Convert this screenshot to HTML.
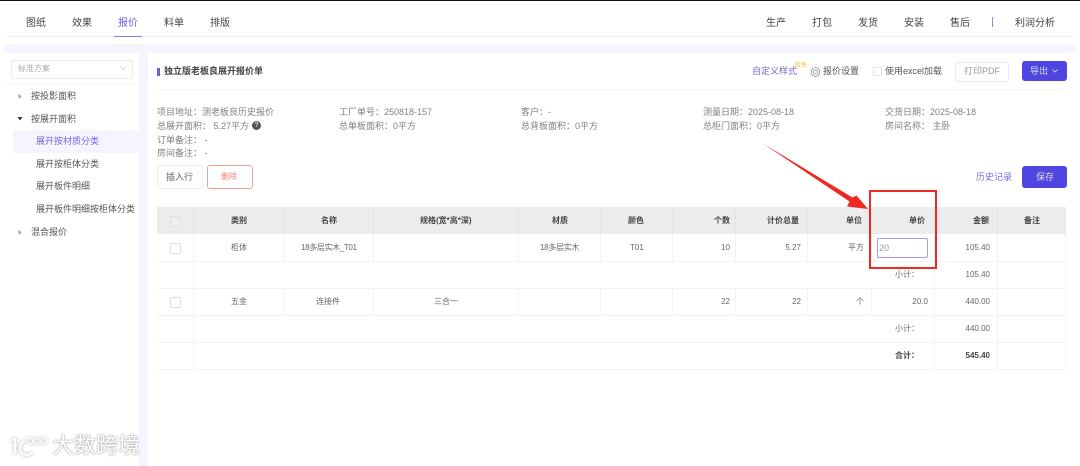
<!DOCTYPE html>
<html lang="zh"><head><meta charset="utf-8"><style>
html,body{margin:0;padding:0;width:1080px;height:466px;overflow:hidden;background:#fff}
body{font-family:"Liberation Sans","Noto Sans CJK SC",sans-serif;position:relative;color:#606266}
#w{position:absolute;left:0;top:0;width:1080px;height:466px;filter:blur(.35px);overflow:hidden}
.a{position:absolute;white-space:nowrap;line-height:14px;font-size:9px}
.b{position:absolute}
.n{font-size:10px;color:#444;top:17px}
.g{color:#808080;font-size:9px}
.s{font-size:9px;color:#555}
.h{position:absolute;top:207px;height:27px;line-height:27px;font-size:8px;font-weight:bold;color:#444;white-space:nowrap}
.c{position:absolute;font-size:8px;line-height:27px;height:27px;color:#666;white-space:nowrap}
.v{position:absolute;width:1px;background:#f3f3f3}
.l{position:absolute;height:1px;background:#f3f3f3;left:157px;width:909px}
.cb{position:absolute;left:170px;width:9px;height:9px;border:1px solid #dedede;border-radius:2px;background:#fff}
</style></head><body><div id="w">
<div class="b" style="left:0;top:0;width:1080px;height:1px;background:#111"></div>
<div class="b" style="left:4px;top:36px;width:1072px;height:1px;background:#f2f2f2"></div>
<div class="b" style="left:4px;top:44px;width:1072px;height:422px;background:#f5f5ff"></div>
<div class="b" style="left:4px;top:53px;width:135px;height:413px;background:#fff"></div>
<div class="b" style="left:148px;top:53px;width:928px;height:413px;background:#fff"></div>

<span class="a n" style="left:26px">图纸</span>
<span class="a n" style="left:72px">效果</span>
<span class="a n" style="left:118px;color:#6a5fe0">报价</span>
<span class="a n" style="left:164px">料单</span>
<span class="a n" style="left:210px">排版</span>
<div class="b" style="left:114px;top:36px;width:28px;height:1px;background:#8b80e8"></div>
<span class="a n" style="left:766px">生产</span>
<span class="a n" style="left:812px">打包</span>
<span class="a n" style="left:858px">发货</span>
<span class="a n" style="left:904px">安装</span>
<span class="a n" style="left:950px">售后</span>
<div class="b" style="left:992px;top:17px;width:1px;height:10px;background:#8b8fd0"></div>
<span class="a n" style="left:1015px">利润分析</span>

<!-- sidebar -->
<div class="b" style="left:11px;top:60px;width:120px;height:17px;border:1px solid #ebebeb;border-radius:2px"></div>
<span class="a" style="left:18px;top:62px;font-size:8px;color:#aaa">标准方案</span>
<svg class="b" style="left:119px;top:65px" width="9" height="7"><path d="M1.500 1.500L4.500 4.500L7.500 1.500" fill="none" stroke="#d0d0d0" stroke-width=".8"/></svg>
<div class="b" style="left:4px;top:84px;width:135px;height:1px;background:#f5f5f5"></div>
<svg class="b" style="left:17px;top:93px" width="6" height="7"><path d="M1.500 1L5 3.500L1.500 6Z" fill="#aaa"/></svg>
<span class="a s" style="left:31px;top:89px">按投影面积</span>
<svg class="b" style="left:16px;top:116px" width="8" height="6"><path d="M1.500 1L6.500 1L4 4.500Z" fill="#333"/></svg>
<span class="a s" style="left:31px;top:112px">按展开面积</span>
<div class="b" style="left:13px;top:130px;width:126px;height:23px;background:#f5f4ff"></div>
<span class="a" style="left:36px;top:134px;color:#7468e0">展开按材质分类</span>
<span class="a s" style="left:36px;top:157px">展开按柜体分类</span>
<span class="a s" style="left:36px;top:179px">展开板件明细</span>
<span class="a s" style="left:36px;top:202px">展开板件明细按柜体分类</span>
<svg class="b" style="left:17px;top:229px" width="6" height="7"><path d="M1.500 1L5 3.500L1.500 6Z" fill="#aaa"/></svg>
<span class="a s" style="left:31px;top:225px">混合报价</span>

<!-- title -->
<div class="b" style="left:157px;top:68px;width:3px;height:8px;background:#6a5fe0"></div>
<span class="a" style="left:164px;top:64px;font-weight:bold;color:#444">独立版老板良展开报价单</span>
<div class="b" style="left:157px;top:89px;width:909px;height:1px;background:#f4f4f4"></div>
<span class="a" style="left:752px;top:64px;color:#7468e0">自定义样式</span>
<span class="a" style="left:795px;top:62px;font-size:6px;line-height:8px;color:#f0c040">限免</span>
<svg class="b" style="left:810px;top:66px" width="11" height="12"><circle cx="5.500" cy="6" r="4.300" fill="none" stroke="#777" stroke-width=".7"/><circle cx="5.500" cy="6" r="2" fill="none" stroke="#777" stroke-width=".7"/></svg>
<span class="a" style="left:823px;top:64px;color:#555">报价设置</span>
<div class="b" style="left:873px;top:67px;width:7px;height:7px;border:1px solid #e8e8e8"></div>
<span class="a" style="left:885px;top:64px;color:#555">使用excel加载</span>
<div class="b" style="left:955px;top:62px;width:52px;height:18px;border:1px solid #ebebeb;border-radius:2px"></div>
<span class="a" style="left:964px;top:64px;color:#999">打印PDF</span>
<div class="b" style="left:1022px;top:61px;width:45px;height:20px;background:#4f45e0;border-radius:3px"></div>
<span class="a" style="left:1030px;top:64px;color:#ddd">导出</span>
<svg class="b" style="left:1051px;top:68px" width="8" height="6"><path d="M1.500 1.500L4 4L6.500 1.500" fill="none" stroke="#ddd" stroke-width=".8"/></svg>

<!-- info -->
<span class="a g" style="left:157px;top:105px">项目地址：测老板良历史报价</span>
<span class="a g" style="left:339px;top:105px">工厂单号：250818-157</span>
<span class="a g" style="left:521px;top:105px">客户：-</span>
<span class="a g" style="left:703px;top:105px">测量日期：2025-08-18</span>
<span class="a g" style="left:885px;top:105px">交货日期：2025-08-18</span>
<span class="a g" style="left:157px;top:119px">总展开面积：&nbsp;5.27平方</span>
<div class="b" style="left:252px;top:121px;width:9px;height:9px;border-radius:50%;background:#555;color:#fff;font-size:7px;line-height:9px;text-align:center">?</div>
<span class="a g" style="left:339px;top:119px">总单板面积：0平方</span>
<span class="a g" style="left:521px;top:119px">总背板面积：0平方</span>
<span class="a g" style="left:703px;top:119px">总柜门面积：0平方</span>
<span class="a g" style="left:885px;top:119px">房间名称：&nbsp;主卧</span>
<span class="a g" style="left:157px;top:133px">订单备注：&nbsp;-</span>
<span class="a g" style="left:157px;top:146px">房间备注：&nbsp;-</span>

<!-- buttons -->
<div class="b" style="left:157px;top:165px;width:44px;height:22px;border:1px solid #ececec;border-radius:3px"></div>
<span class="a" style="left:166px;top:170px;font-size:9px;color:#666">插入行</span>
<div class="b" style="left:207px;top:165px;width:44px;height:22px;border:1px solid #f0a097;border-radius:3px"></div>
<span class="a" style="left:221px;top:170px;font-size:8px;color:#f08078">删除</span>
<span class="a" style="left:976px;top:170px;color:#7468e0">历史记录</span>
<div class="b" style="left:1022px;top:166px;width:45px;height:22px;background:#4f45e0;border-radius:3px"></div>
<span class="a" style="left:1036px;top:170px;color:#ddd">保存</span>

<!-- table -->
<div class="b" style="left:157px;top:207px;width:909px;height:27px;background:#ececec"></div>
<div class="l" style="top:261px"></div><div class="l" style="top:288px"></div><div class="l" style="top:315px"></div><div class="l" style="top:342px"></div><div class="l" style="top:369px"></div>
<div class="v" style="left:193px;top:234px;height:135px"></div>
<div class="v" style="left:283px;top:234px;height:27px"></div><div class="v" style="left:283px;top:288px;height:27px"></div>
<div class="v" style="left:373px;top:234px;height:27px"></div><div class="v" style="left:373px;top:288px;height:27px"></div>
<div class="v" style="left:518px;top:234px;height:27px"></div><div class="v" style="left:518px;top:288px;height:27px"></div>
<div class="v" style="left:600px;top:234px;height:27px"></div><div class="v" style="left:600px;top:288px;height:27px"></div>
<div class="v" style="left:672px;top:234px;height:27px"></div><div class="v" style="left:672px;top:288px;height:27px"></div>
<div class="v" style="left:735px;top:234px;height:27px"></div><div class="v" style="left:735px;top:288px;height:27px"></div>
<div class="v" style="left:807px;top:234px;height:27px"></div><div class="v" style="left:807px;top:288px;height:27px"></div>
<div class="v" style="left:871px;top:234px;height:27px"></div><div class="v" style="left:871px;top:288px;height:27px"></div>
<div class="v" style="left:934px;top:234px;height:135px"></div>
<div class="v" style="left:997px;top:234px;height:135px"></div>
<div class="v" style="left:1065px;top:234px;height:135px"></div>
<div class="v" style="left:193px;top:207px;height:27px;background:#e4e4e4"></div>
<div class="v" style="left:283px;top:207px;height:27px;background:#e4e4e4"></div>
<div class="v" style="left:373px;top:207px;height:27px;background:#e4e4e4"></div>
<div class="v" style="left:518px;top:207px;height:27px;background:#e4e4e4"></div>
<div class="v" style="left:600px;top:207px;height:27px;background:#e4e4e4"></div>
<div class="v" style="left:672px;top:207px;height:27px;background:#e4e4e4"></div>
<div class="v" style="left:735px;top:207px;height:27px;background:#e4e4e4"></div>
<div class="v" style="left:807px;top:207px;height:27px;background:#e4e4e4"></div>
<div class="v" style="left:997px;top:207px;height:27px;background:#e4e4e4"></div>

<div class="cb" style="top:216px;background:#eee;border-color:#e0e0e0"></div>
<div class="cb" style="top:243px"></div>
<div class="cb" style="top:297px"></div>

<span class="h" style="left:231px">类别</span>
<span class="h" style="left:321px">名称</span>
<span class="h" style="left:420px">规格(宽*高*深)</span>
<span class="h" style="left:552px">材质</span>
<span class="h" style="left:628px">颜色</span>
<span class="h" style="right:350px">个数</span>
<span class="h" style="right:281px">计价总量</span>
<span class="h" style="right:218px">单位</span>
<span class="h" style="right:155px">单价</span>
<span class="h" style="right:91px">金额</span>
<span class="h" style="left:1024px">备注</span>

<span class="c" style="left:231px;top:234px">柜体</span>
<span class="c" style="left:301px;top:234px;letter-spacing:-.35px">18多层实木_T01</span>
<span class="c" style="left:540px;top:234px;letter-spacing:-.3px">18多层实木</span>
<span class="c" style="left:630px;top:234px">T01</span>
<span class="c" style="right:350px;top:234px">10</span>
<span class="c" style="right:279px;top:234px">5.27</span>
<span class="c" style="right:216px;top:234px">平方</span>
<div class="b" style="left:877px;top:238px;width:49px;height:18px;border:1px solid #a49ce8;border-radius:2px;font-size:9px;line-height:18px;color:#999;text-indent:1px">20</div>
<span class="c" style="right:90px;top:234px">105.40</span>

<span class="c" style="left:895px;top:261px">小计：</span>
<span class="c" style="right:90px;top:261px">105.40</span>

<span class="c" style="left:231px;top:288px">五金</span>
<span class="c" style="left:316px;top:288px">连接件</span>
<span class="c" style="left:434px;top:288px">三合一</span>
<span class="c" style="right:350px;top:288px">22</span>
<span class="c" style="right:279px;top:288px">22</span>
<span class="c" style="right:216px;top:288px">个</span>
<span class="c" style="right:152px;top:288px">20.0</span>
<span class="c" style="right:90px;top:288px">440.00</span>

<span class="c" style="left:895px;top:315px">小计：</span>
<span class="c" style="right:90px;top:315px">440.00</span>

<span class="c" style="left:895px;top:342px;font-weight:bold;color:#444">合计：</span>
<span class="c" style="right:90px;top:342px;font-weight:bold;color:#444">545.40</span>

<!-- annotation -->
<div class="b" style="left:869px;top:190px;width:64px;height:75px;border:2.500px solid #ee2a20"></div>
<svg class="b" style="left:0;top:0" width="1080" height="466"><path d="M763 143.500L852.500 197.500L856.500 195.500L868 209L847 206.500L849.500 201.500Z" fill="#ee2a20"/></svg>

<!-- watermark -->
<svg class="b" style="left:8px;top:433px;filter:drop-shadow(0 0 1.500px #aaa)" width="44" height="26"><g fill="none" stroke="#fff" stroke-width="2"><path d="M3 8L7 5.500V21"/><path d="M17 8C11 10 10 21 18 22C21 22 23 21 24 19"/></g><g fill="none" stroke="#fff" stroke-width="1.200"><circle cx="22" cy="8" r="3"/><circle cx="29" cy="8" r="3"/><circle cx="36" cy="8" r="3"/></g></svg>
<span class="a" style="left:52px;top:435px;font-size:22px;line-height:22px;color:#fff;text-shadow:0 0 2px #999,0 0 1px #aaa">大数跨境</span>
</div></body></html>
